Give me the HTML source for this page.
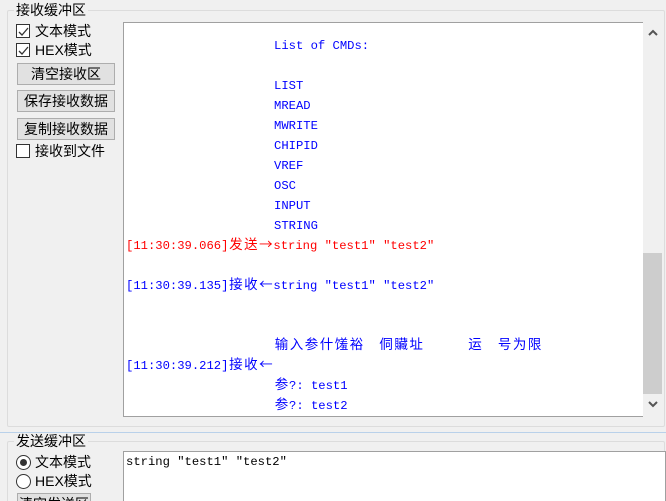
<!DOCTYPE html>
<html><head><meta charset="utf-8"><style>
*{margin:0;padding:0;box-sizing:border-box}
html,body{width:666px;height:501px;overflow:hidden}
body{background:#f0f0f0;position:relative;font-family:"Liberation Sans","Noto Sans CJK SC",sans-serif;font-size:14px;color:#000}
.abs{position:absolute}
.grp{position:absolute;border:1px solid #dcdcdc;border-radius:2px}
.lbl{position:absolute;background:#f0f0f0;padding:0 2px;font-size:14px;line-height:16px}
.cb{position:absolute;width:14px;height:14px;border:1px solid #333;background:#fff}
.btn{position:absolute;left:17px;width:98px;height:22px;background:#e1e1e1;border:1px solid #adadad;font-size:14px;line-height:20px;text-align:center}
.txt{position:absolute;left:17px;font-size:14px;line-height:16px}
.mono{font-family:"Liberation Mono","Noto Sans CJK SC",monospace;font-size:12.2px;position:absolute;white-space:pre;line-height:20px;top:0}
.c{display:inline-block;width:15px;height:20px;line-height:20px;vertical-align:top;text-align:center;font-family:"Noto Sans CJK SC",sans-serif;font-size:13.5px;position:relative;top:-3px}
.b{color:#0000ff}.r{color:#ff0000}
</style></head><body>
<div class="grp" style="left:7px;top:10px;width:658px;height:417px"></div>
<div class="lbl" style="left:14px;top:2px">接收缓冲区</div>
<div class="cb" style="left:16px;top:24px"><svg width="12" height="12"><path d="M2 6 L5 9 L11 2" stroke="#333" stroke-width="1.3" fill="none"/></svg></div>
<div class="txt" style="left:35px;top:23px">文本模式</div>
<div class="cb" style="left:16px;top:43px"><svg width="12" height="12"><path d="M2 6 L5 9 L11 2" stroke="#333" stroke-width="1.3" fill="none"/></svg></div>
<div class="txt" style="left:35px;top:42px">HEX模式</div>
<div class="btn" style="top:63px">清空接收区</div>
<div class="btn" style="top:90px">保存接收数据</div>
<div class="btn" style="top:118px">复制接收数据</div>
<div class="cb" style="left:16px;top:144px"></div>
<div class="txt" style="left:35px;top:143px">接收到文件</div>
<div class="abs" style="left:123px;top:22px;width:540px;height:395px;background:#fff;border:1px solid #a0a0a0;border-right:none"></div>
<div class="abs" style="left:643px;top:22px;width:20px;height:395px;background:#f0f0f0"></div>
<div class="abs" style="left:643px;top:253px;width:19px;height:141px;background:#cdcdcd"></div>
<svg class="abs" style="left:647px;top:29px" width="12" height="8"><path d="M2 6 L6 2 L10 6" stroke="#555" stroke-width="2" fill="none"/></svg>
<svg class="abs" style="left:647px;top:400px" width="12" height="8"><path d="M2 2 L6 6 L10 2" stroke="#555" stroke-width="2" fill="none"/></svg>
<div class="mono b" style="left:274px;top:36px">List of CMDs:</div>
<div class="mono b" style="left:274px;top:76px">LIST
MREAD
MWRITE
CHIPID
VREF
OSC
INPUT
STRING</div>
<div class="mono r" style="left:126px;top:236px">[11:30:39.066]<span class="c">发</span><span class="c">送</span><span class="c">→</span>string ″test1″ ″test2″</div>
<div class="mono b" style="left:126px;top:276px">[11:30:39.135]<span class="c">接</span><span class="c">收</span><span class="c">←</span>string ″test1″ ″test2″</div>
<div class="mono b" style="left:274px;top:336px"><span class="c">输</span><span class="c">入</span><span class="c">参</span><span class="c">什</span><span class="c">馐</span><span class="c">裕</span>  <span class="c">侗</span><span class="c">贜</span><span class="c">址</span>      <span class="c">运</span>  <span class="c">号</span><span class="c">为</span><span class="c">限</span></div>
<div class="mono b" style="left:126px;top:356px">[11:30:39.212]<span class="c">接</span><span class="c">收</span><span class="c">←</span></div>
<div class="mono b" style="left:274px;top:376px"><span class="c">参</span>?: test1</div>
<div class="mono b" style="left:274px;top:396px"><span class="c">参</span>?: test2</div>
<div class="abs" style="left:0;top:432px;width:666px;height:1px;background:#b9d1ea"></div>
<div class="grp" style="left:7px;top:441px;width:658px;height:70px"></div>
<div class="lbl" style="left:14px;top:433px">发送缓冲区</div>
<div class="abs" style="left:16px;top:455px;width:15px;height:15px;border:1px solid #333;border-radius:50%;background:#fff"><div class="abs" style="left:3px;top:3px;width:7px;height:7px;border-radius:50%;background:#333"></div></div>
<div class="txt" style="left:35px;top:454px">文本模式</div>
<div class="abs" style="left:16px;top:474px;width:15px;height:15px;border:1px solid #333;border-radius:50%;background:#fff"></div>
<div class="txt" style="left:35px;top:473px">HEX模式</div>
<div class="btn" style="top:493px;width:74px">清空发送区</div>
<div class="abs" style="left:123px;top:451px;width:543px;height:60px;background:#fff;border:1px solid #a0a0a0"></div>
<div class="mono" style="left:126px;top:452px">string ″test1″ ″test2″</div>
</body></html>
